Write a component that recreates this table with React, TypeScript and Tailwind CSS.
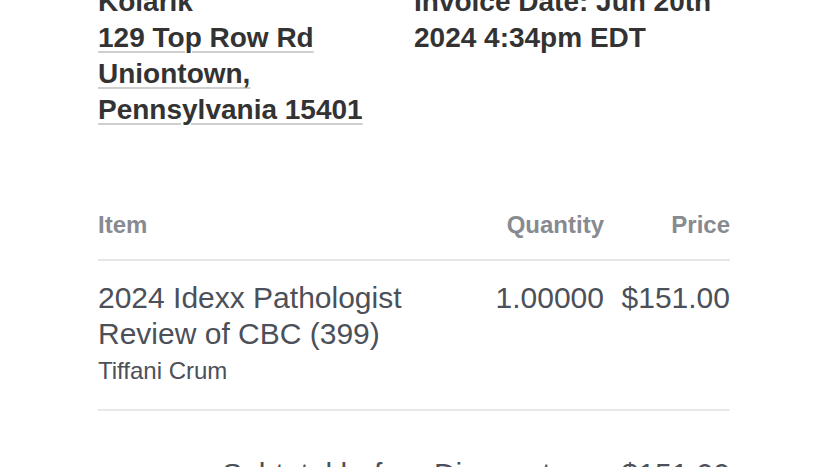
import React from "react";

export default function App() {
  const font = { fontFamily: '"Liberation Sans", Arial, Helvetica, sans-serif' };
  return (
    <div className="w-[828px] h-[467px] overflow-hidden bg-white" style={font}>
      <div className="mx-[98px] w-[632px] -mt-[16px]">
        <div className="grid grid-cols-2">
          <div className="text-[28px] leading-[36px] font-bold text-[#333333]">
            <div>Kolarik</div>
            <a className="underline decoration-2 decoration-[#cfcfcf] underline-offset-[4px]">
              129 Top Row Rd
              <br />
              Uniontown,
              <br />
              Pennsylvania 15401
            </a>
          </div>
          <div className="text-[28px] leading-[36px] font-bold text-[#333333]">
            <div>Invoice Date: Jun 20th</div>
            <div>2024 4:34pm EDT</div>
          </div>
        </div>

        <div className="mt-[83px] flex text-[24px] leading-[28px] font-bold text-[#878a90] pb-[20px] border-b-2 border-[#e6e6e6]">
          <div className="flex-1">Item</div>
          <div className="text-right">Quantity</div>
          <div className="w-[126px] text-right">Price</div>
        </div>

        <div className="flex pt-[19px] pb-[24px] border-b-2 border-[#e8e8e8] text-[#4c5058]">
          <div className="flex-1">
            <div className="text-[30px] leading-[36px] w-[340px]">
              2024 Idexx Pathologist Review of CBC (399)
            </div>
            <div className="text-[24px] leading-[28px] mt-[5px]">Tiffani Crum</div>
          </div>
          <div className="text-[30px] leading-[36px] text-right">1.00000</div>
          <div className="w-[126px] text-[30px] leading-[36px] text-right">$151.00</div>
        </div>

        <div className="flex justify-end pt-[45px] text-[30px] leading-[36px] text-[#4c5058]">
          <div className="text-right">Subtotal before Discounts:</div>
          <div className="w-[156px] text-right">$151.00</div>
        </div>
      </div>
    </div>
  );
}
